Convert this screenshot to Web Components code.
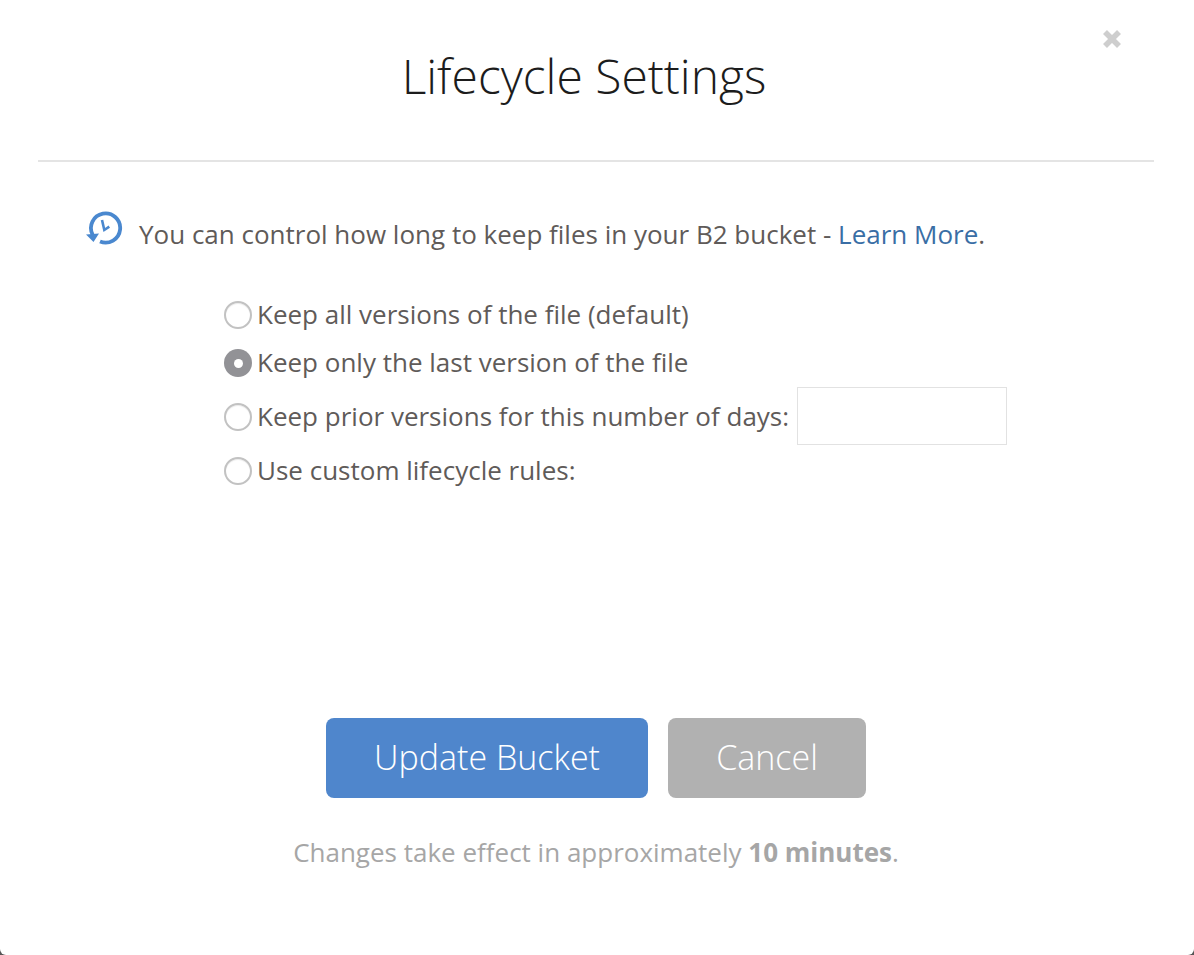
<!DOCTYPE html>
<html>
<head>
<meta charset="utf-8">
<title>Lifecycle Settings</title>
<style>
    html, body { margin: 0; height: 100%; background: #555; }
    body { font-family: "Open Sans", sans-serif; overflow: hidden; }
    a { color: #3a6ea5; text-decoration: none; }
</style>
</head>
<body>
<lifecycle-modal>
    <span slot="title">Lifecycle Settings</span>
    <span slot="intro">You can control how long to keep files in your B2 bucket - <a href="#">Learn More</a>.</span>
    <radio-row>Keep all versions of the file (default)</radio-row>
    <radio-row checked style="margin-top:12px">Keep only the last version of the file</radio-row>
    <radio-row days style="margin-top:7px">Keep prior versions for this number of days:</radio-row>
    <radio-row style="margin-top:7px">Use custom lifecycle rules:</radio-row>
    <modal-button slot="actions" kind="primary" style="width:322px">Update Bucket</modal-button>
    <modal-button slot="actions" kind="secondary" style="width:198px">Cancel</modal-button>
    <span slot="note">Changes take effect in approximately <b>10 minutes</b>.</span>
</lifecycle-modal>

<script>
const radioTemplate = document.createElement('template');
radioTemplate.innerHTML = `
    <style>
        :host {
            display: flex;
            align-items: center;
            gap: 5px;
            font-size: 26px;
            line-height: 36px;
            color: #5f5b59;
            white-space: nowrap;
        }
        .dot {
            box-sizing: border-box;
            width: 28px;
            height: 28px;
            border-radius: 50%;
            border: 2px solid #c2c2c2;
            box-shadow: inset 0 1px 1px rgba(0, 0, 0, 0.08);
            background: #fff;
            flex: none;
            display: flex;
            align-items: center;
            justify-content: center;
            position: relative;
            top: 1px;
        }
        :host([checked]) .dot {
            border: none;
            box-shadow: none;
            background: #929296;
        }
        :host([checked]) .dot::after {
            content: '';
            width: 9px;
            height: 9px;
            border-radius: 50%;
            background: #fff;
        }
        .days {
            display: none;
            box-sizing: border-box;
            width: 210px;
            height: 58px;
            margin-left: 3px;
            border: 1px solid #e2e2e2;
            background: #fff;
        }
        :host([days]) .days { display: block; }
    </style>
    <span class="dot"></span>
    <span><slot></slot></span>
    <input class="days" type="text">
`;

class RadioRow extends HTMLElement {
    constructor() {
        super();
        this.attachShadow({ mode: 'open' });
        this.shadowRoot.appendChild(radioTemplate.content.cloneNode(true));
    }
}
customElements.define('radio-row', RadioRow);

const buttonTemplate = document.createElement('template');
buttonTemplate.innerHTML = `
    <style>
        :host {
            display: flex;
            align-items: center;
            justify-content: center;
            box-sizing: border-box;
            height: 80px;
            padding-bottom: 2px;
            border-radius: 8px;
            font-size: 34px;
            font-weight: 300;
            color: #fff;
            background: #b1b1b1;
            cursor: pointer;
        }
        :host([kind="primary"]) { background: #4f86cc; }
    </style>
    <slot></slot>
`;

class ModalButton extends HTMLElement {
    constructor() {
        super();
        this.attachShadow({ mode: 'open' });
        this.shadowRoot.appendChild(buttonTemplate.content.cloneNode(true));
    }
}
customElements.define('modal-button', ModalButton);

const modalTemplate = document.createElement('template');
modalTemplate.innerHTML = `
    <style>
        :host {
            display: flex;
            flex-direction: column;
            box-sizing: border-box;
            height: 955px;
            padding: 0 40px 0 38px;
            background: #fff;
            border-radius: 0 0 6px 6px;
            position: relative;
        }
        header {
            box-sizing: border-box;
            display: flex;
            align-items: center;
            justify-content: center;
            height: 162px;
            padding: 0 24px 10px 0;
            border-bottom: 2px solid #e4e4e4;
            font-size: 48px;
            font-weight: 300;
            color: #1c1c1c;
        }
        .close {
            position: absolute;
            top: 29px;
            right: 72px;
            width: 20px;
            height: 20px;
        }
        .intro {
            display: flex;
            align-items: flex-start;
            margin-top: 48px;
            padding-left: 48px;
            gap: 15px;
            font-size: 26px;
            line-height: 48px;
            color: #5f5b59;
        }
        .intro svg { flex: none; margin-top: 1px; }
        ::slotted([slot="intro"]) { white-space: nowrap; }
        .options {
            margin-top: 38px;
            margin-left: 186px;
        }
        .actions {
            display: flex;
            justify-content: center;
            gap: 20px;
            margin-top: 230px;
        }
        .note {
            margin-top: 34px;
            text-align: center;
            font-size: 26px;
            line-height: 40px;
            color: #a6a6a6;
        }
    </style>
    <header><slot name="title"></slot></header>
    <svg class="close" viewBox="0 0 20 20"><path d="M3 3 L17 17 M17 3 L3 17" stroke="#cecece" stroke-width="5.6" fill="none"/></svg>
    <div class="intro">
        <svg width="38" height="36" viewBox="0 0 38 36" fill="none" stroke="#4a88cf" stroke-width="3.8">
            <path d="M6.6 23.7 A14.6 14.6 0 1 1 14 30.5"/>
            <path d="M0 23.5 L13 22.5 L7.5 31 Z" fill="#4a88cf" stroke="none"/>
            <path d="M16 9 L18.3 19 L23.3 15.7" stroke-width="2.6"/>
        </svg>
        <span><slot name="intro"></slot></span>
    </div>
    <div class="options"><slot></slot></div>
    <div class="actions"><slot name="actions"></slot></div>
    <div class="note"><slot name="note"></slot></div>
`;

class LifecycleModal extends HTMLElement {
    constructor() {
        super();
        this.attachShadow({ mode: 'open' });
        this.shadowRoot.appendChild(modalTemplate.content.cloneNode(true));
    }
}
customElements.define('lifecycle-modal', LifecycleModal);
</script>
</body>
</html>
